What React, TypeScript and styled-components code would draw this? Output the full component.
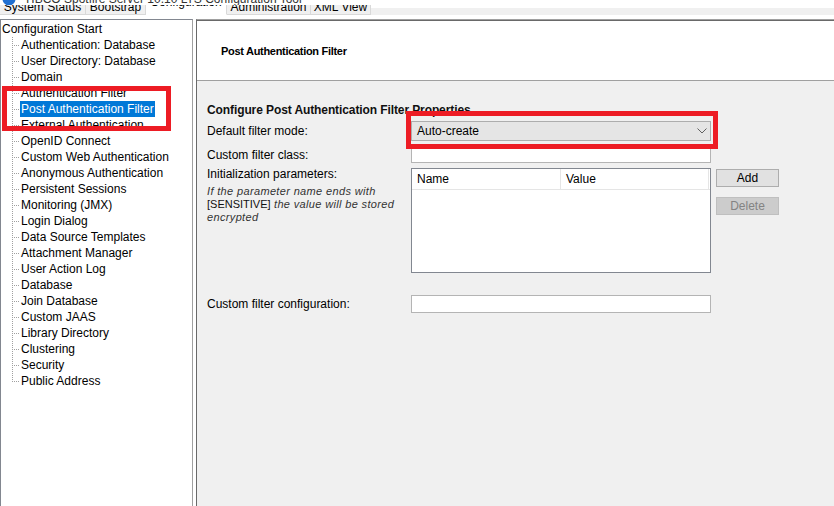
import React from "react";
import styled, { createGlobalStyle } from "styled-components";

const GlobalStyle = createGlobalStyle`
  html, body { margin: 0; padding: 0; background: #fff; }
  body { font-family: "Liberation Sans", Arial, sans-serif; font-size: 12px; color: #000; }
  * { box-sizing: border-box; }
`;

const Window = styled.div`
  position: relative;
  width: 834px;
  height: 506px;
  overflow: hidden;
  display: flex;
  flex-direction: column;
  background: #fff;
`;

const TitleStrip = styled.div`
  flex: none;
  height: 5px;
  overflow: hidden;
`;

const TitleInner = styled.div`
  display: flex;
  align-items: center;
  gap: 8px;
  height: 16px;
  margin-top: -9px;
  padding-left: 2px;
  font-size: 12px;
  line-height: 16px;
  color: #333;
  white-space: nowrap;
`;

const TabStrip = styled.div`
  flex: none;
  display: flex;
  height: 10px;
  margin-bottom: 4px;
  background: linear-gradient(#fff 0 3px, #f0f0f0 3px 100%);
`;

const Tab = styled.div<{ $w: number; $active?: boolean }>`
  flex: none;
  width: ${(p) => p.$w}px;
  height: 100%;
  overflow: hidden;
  display: flex;
  align-items: flex-end;
  justify-content: center;
  padding-bottom: ${(p) => (p.$active ? 5 : 0)}px;
  background: ${(p) => (p.$active ? "#fff" : "#f0f0f0")};
  border-right: 1px solid #d9d9d9;
  border-bottom: 1px solid ${(p) => (p.$active ? "#fff" : "#d9d9d9")};
  font-size: 12px;
  line-height: 14px;
  white-space: nowrap;
  color: #000;
`;

const Main = styled.div`
  flex: 1;
  display: flex;
  min-height: 0;
`;

const TreePanel = styled.div`
  flex: none;
  width: 193px;
  margin-right: 3px;
  padding-top: 1px;
  background: #fff;
  border-top: 1px solid #828790;
  border-left: 1px solid #828790;
  border-right: 1px solid #a0a0a0;
`;

const TreeRow = styled.div`
  display: flex;
  align-items: center;
  height: 16px;
  white-space: nowrap;
`;

const Connector = styled.span<{ $last?: boolean }>`
  flex: none;
  width: 19px;
  height: 16px;
  background-image: repeating-linear-gradient(to bottom, #a0a0a0 0 1px, transparent 1px 2px),
    repeating-linear-gradient(to right, #a0a0a0 0 1px, transparent 1px 2px);
  background-repeat: no-repeat;
  background-size: 1px ${(p) => (p.$last ? "9px" : "100%")}, 8px 1px;
  background-position: 11px 0, 11px 8px;
`;

const TreeLabel = styled.span<{ $selected?: boolean }>`
  padding: 0 1px;
  line-height: 16px;
  font-size: 12px;
  background: ${(p) => (p.$selected ? "#0078d7" : "transparent")};
  color: ${(p) => (p.$selected ? "#fff" : "#000")};
`;

const RightPanel = styled.div`
  flex: 1;
  display: flex;
  flex-direction: column;
  background: #f0f0f0;
  border-left: 1px solid #696969;
  border-top: 1px solid #a0a0a0;
`;

const Header = styled.div`
  flex: none;
  height: 61px;
  display: flex;
  align-items: center;
  padding-left: 24px;
  background: #fff;
  border-top: 1px solid #696969;
  border-bottom: 1px solid #a0a0a0;
  font-size: 11px;
  font-weight: bold;
  letter-spacing: -0.3px;
`;

const Body = styled.div`
  padding: 21px 0 0 10px;
`;

const SectionTitle = styled.div`
  font-size: 12px;
  font-weight: bold;
  line-height: 16px;
  letter-spacing: -0.1px;
  color: #111;
`;

const FieldRow = styled.div<{ $mt: number; $top?: boolean }>`
  display: flex;
  align-items: ${(p) => (p.$top ? "flex-start" : "center")};
  margin-top: ${(p) => p.$mt}px;
`;

const LabelCol = styled.div`
  flex: none;
  width: 204px;
`;

const Label = styled.div<{ $mt?: number }>`
  font-size: 12px;
  line-height: 14px;
  margin-top: ${(p) => p.$mt ?? 0}px;
  white-space: nowrap;
`;

const Hint = styled.div`
  margin-top: 4px;
  font-size: 11px;
  line-height: 13px;
  letter-spacing: 0.35px;
  font-style: italic;
  color: #333;
  white-space: nowrap;
`;

const Plain = styled.span`
  font-style: normal;
  letter-spacing: 0;
  color: #111;
`;

const Select = styled.div`
  flex: none;
  width: 300px;
  height: 20px;
  display: flex;
  align-items: center;
  justify-content: space-between;
  padding: 0 3px 0 5px;
  background: #e5e5e5;
  border: 1px solid #adadad;
  font-size: 12px;
`;

const TextBox = styled.div<{ $h: number }>`
  flex: none;
  width: 300px;
  height: ${(p) => p.$h}px;
  background: #fff;
  border: 1px solid #b4b4b4;
`;

const Table = styled.div`
  flex: none;
  width: 300px;
  height: 105px;
  background: #fff;
  border: 1px solid #828790;
`;

const TableHead = styled.div`
  display: flex;
  height: 21px;
  border-bottom: 1px solid #e5e5e5;
`;

const HeadCell = styled.div<{ $w: number }>`
  flex: none;
  width: ${(p) => p.$w}px;
  display: flex;
  align-items: center;
  padding-left: 5px;
  border-right: 1px solid #e5e5e5;
  font-size: 12px;
`;

const ButtonCol = styled.div`
  display: flex;
  flex-direction: column;
  margin-left: 5px;
`;

const Button = styled.div<{ $disabled?: boolean; $mt: number }>`
  width: 63px;
  height: 18px;
  margin-top: ${(p) => p.$mt}px;
  display: flex;
  align-items: center;
  justify-content: center;
  font-size: 12px;
  background: ${(p) => (p.$disabled ? "#cccccc" : "#e1e1e1")};
  border: 1px solid ${(p) => (p.$disabled ? "#bfbfbf" : "#adadad")};
  color: ${(p) => (p.$disabled ? "#838383" : "#000")};
`;

const Highlight = styled.div<{ $x: number; $y: number; $w: number; $h: number }>`
  position: absolute;
  left: ${(p) => p.$x}px;
  top: ${(p) => p.$y}px;
  width: ${(p) => p.$w}px;
  height: ${(p) => p.$h}px;
  border: 5px solid #ed1c24;
  pointer-events: none;
`;

const tabs = [
  { label: "System Status", w: 86 },
  { label: "Bootstrap", w: 60 },
  { label: "Configuration", w: 81, active: true },
  { label: "Administration", w: 84 },
  { label: "XML View", w: 60 },
];

const items = [
  "Authentication: Database",
  "User Directory: Database",
  "Domain",
  "Authentication Filter",
  "Post Authentication Filter",
  "External Authentication",
  "OpenID Connect",
  "Custom Web Authentication",
  "Anonymous Authentication",
  "Persistent Sessions",
  "Monitoring (JMX)",
  "Login Dialog",
  "Data Source Templates",
  "Attachment Manager",
  "User Action Log",
  "Database",
  "Join Database",
  "Custom JAAS",
  "Library Directory",
  "Clustering",
  "Security",
  "Public Address",
];

export default function App() {
  return (
    <>
      <GlobalStyle />
      <Window>
        <TitleStrip>
          <TitleInner>
            <svg width="14" height="14" viewBox="0 0 14 14">
              <circle cx="7" cy="7" r="6.5" fill="#1f6fd1" />
            </svg>
            <span>TIBCO Spotfire Server 10.10 LTS Configuration Tool</span>
          </TitleInner>
        </TitleStrip>
        <TabStrip>
          {tabs.map((t) => (
            <Tab key={t.label} $w={t.w} $active={t.active}>
              {t.label}
            </Tab>
          ))}
        </TabStrip>
        <Main>
          <TreePanel>
            <TreeRow>
              <TreeLabel>Configuration Start</TreeLabel>
            </TreeRow>
            {items.map((it, i) => (
              <TreeRow key={it}>
                <Connector $last={i === items.length - 1} />
                <TreeLabel $selected={it === "Post Authentication Filter"}>{it}</TreeLabel>
              </TreeRow>
            ))}
          </TreePanel>
          <RightPanel>
            <Header>Post Authentication Filter</Header>
            <Body>
              <SectionTitle>Configure Post Authentication Filter Properties</SectionTitle>
              <FieldRow $mt={3}>
                <LabelCol>
                  <Label>Default filter mode:</Label>
                </LabelCol>
                <Select>
                  <span>Auto-create</span>
                  <svg width="10" height="6" viewBox="0 0 10 6">
                    <polyline points="0.5,0.5 5,5 9.5,0.5" fill="none" stroke="#606060" strokeWidth="1" />
                  </svg>
                </Select>
              </FieldRow>
              <FieldRow $mt={5}>
                <LabelCol>
                  <Label>Custom filter class:</Label>
                </LabelCol>
                <TextBox $h={17} />
              </FieldRow>
              <FieldRow $mt={5} $top>
                <LabelCol>
                  <Label $mt={-1}>Initialization parameters:</Label>
                  <Hint>
                    If the parameter name ends with
                    <br />
                    <Plain>[SENSITIVE]</Plain> the value will be stored
                    <br />
                    encrypted
                  </Hint>
                </LabelCol>
                <Table>
                  <TableHead>
                    <HeadCell $w={149}>Name</HeadCell>
                    <HeadCell $w={148}>Value</HeadCell>
                  </TableHead>
                </Table>
                <ButtonCol>
                  <Button $mt={1}>Add</Button>
                  <Button $mt={10} $disabled>
                    Delete
                  </Button>
                </ButtonCol>
              </FieldRow>
              <FieldRow $mt={22}>
                <LabelCol>
                  <Label>Custom filter configuration:</Label>
                </LabelCol>
                <TextBox $h={18} />
              </FieldRow>
            </Body>
          </RightPanel>
        </Main>
        <Highlight $x={2} $y={86} $w={169} $h={45} />
        <Highlight $x={406} $y={111} $w={312} $h={38} />
      </Window>
    </>
  );
}
